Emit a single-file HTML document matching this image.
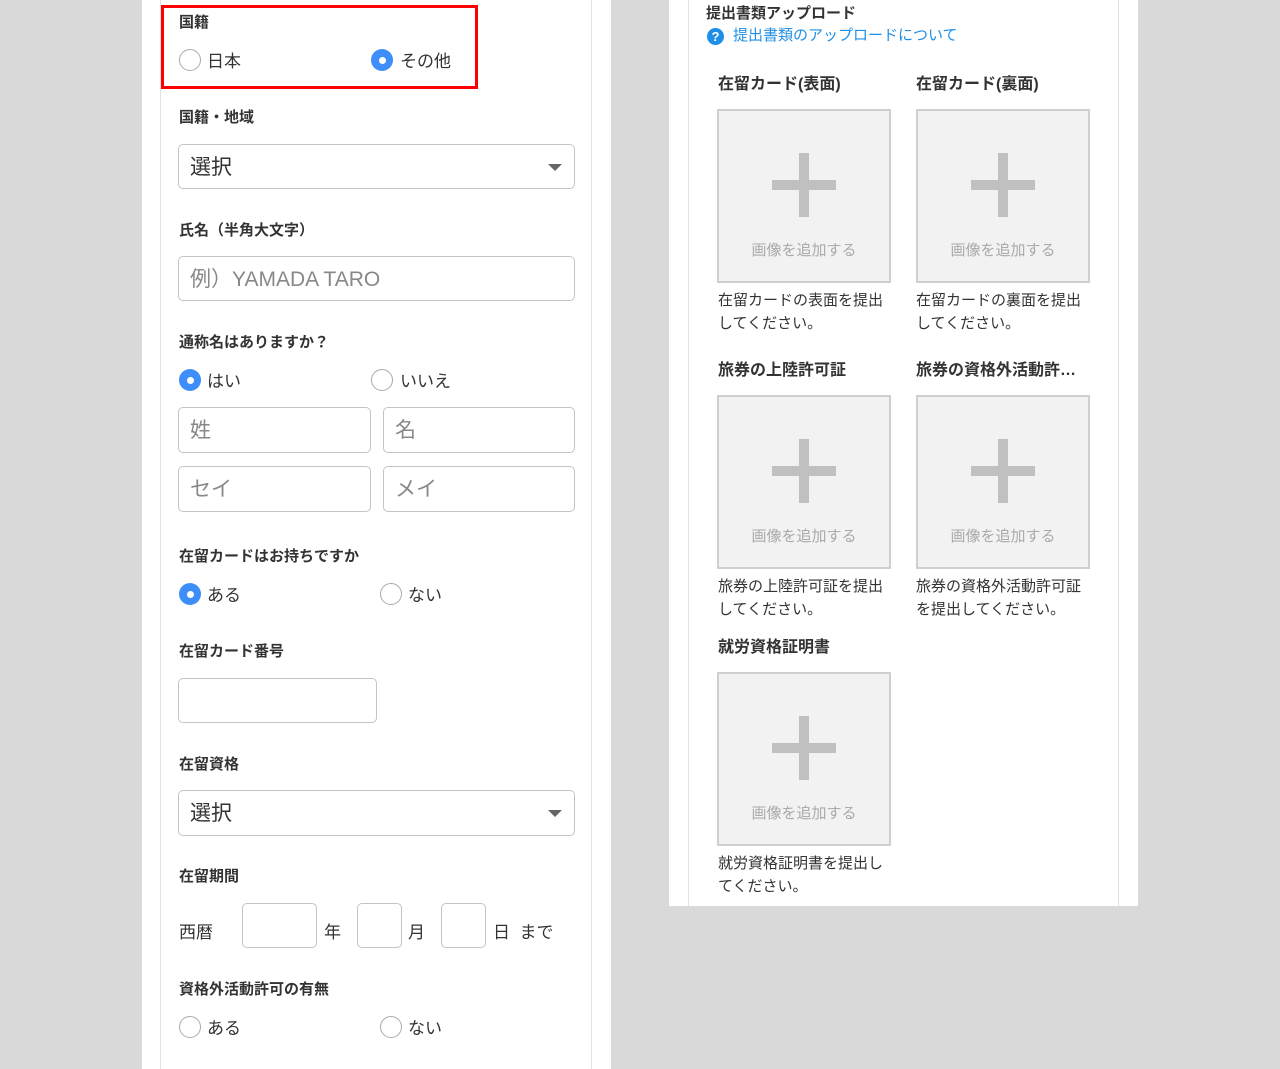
<!DOCTYPE html>
<html><head><meta charset="utf-8"><style>
*{margin:0;padding:0;box-sizing:border-box}
body{width:1280px;height:1069px;background:#d9d9d9;position:relative;overflow:hidden;font-family:"Liberation Sans","Noto Sans CJK JP",sans-serif;color:#333}
.a{position:absolute}
.panel{background:#fff}
.vl{position:absolute;top:0;width:1px;background:#e2e2e2}
.lb{position:absolute;font-size:15px;font-weight:bold;color:#333;line-height:20px;transform:translateY(-10px);white-space:nowrap}
.rd{position:absolute;width:22px;height:22px;border:1.5px solid #aaa;border-radius:50%;background:#fff;transform:translateY(-11px)}
.rd.on{border:none;background:#3d8ef8}
.rd.on::after{content:"";position:absolute;left:7.5px;top:7.5px;width:7px;height:7px;border-radius:50%;background:#fff}
.rt{position:absolute;font-size:17px;line-height:22px;transform:translateY(-9px);color:#333;white-space:nowrap}
.in{position:absolute;border:1.5px solid #c4c4c4;border-radius:5px;background:#fff;font-size:21px;color:#888;padding-left:11px;padding-top:3px;line-height:40px;white-space:nowrap}
.sel{color:#333}
.arr{position:absolute;right:12px;top:19px;width:0;height:0;border-left:7px solid transparent;border-right:7px solid transparent;border-top:7px solid #666}
.tx{position:absolute;font-size:17px;line-height:22px;transform:translateY(-10px);color:#333}
.h{position:absolute;font-size:16px;font-weight:bold;line-height:20px;transform:translateY(-10px);color:#333;white-space:nowrap}
.box{position:absolute;width:174px;height:174px;background:#f2f2f2;border:2px solid #cfcfcf}
.box::before{content:"";position:absolute;left:53px;top:69px;width:64px;height:10px;background:#c0c0c0}
.box::after{content:"";position:absolute;left:80px;top:42px;width:10px;height:64px;background:#c0c0c0}
.box span{position:absolute;left:0;right:0;top:130px;text-align:center;font-size:15px;color:#aaa;line-height:20px;white-space:nowrap}
.d{position:absolute;font-size:15px;line-height:23px;color:#333;width:190px}
</style></head><body>
<div class="a panel" style="left:142px;top:0;width:469px;height:1069px"></div>
<div class="vl" style="left:160px;height:1069px"></div>
<div class="vl" style="left:591px;height:1069px"></div>
<div class="a" style="left:161px;top:5px;width:317px;height:84px;border:3px solid #f00"></div>

<div class="lb" style="left:179px;top:23px">国籍</div>
<div class="rd" style="left:179px;top:60px"></div><div class="rt" style="left:207px;top:60px">日本</div>
<div class="rd on" style="left:371px;top:60px"></div><div class="rt" style="left:400px;top:60px">その他</div>

<div class="lb" style="left:179px;top:118px">国籍・地域</div>
<div class="in sel" style="left:178px;top:144px;width:397px;height:45px">選択<div class="arr"></div></div>

<div class="lb" style="left:179px;top:231px">氏名（半角大文字）</div>
<div class="in" style="left:178px;top:256px;width:397px;height:45px">例）YAMADA TARO</div>

<div class="lb" style="left:179px;top:343px">通称名はありますか？</div>
<div class="rd on" style="left:179px;top:380px"></div><div class="rt" style="left:207px;top:380px">はい</div>
<div class="rd" style="left:371px;top:380px"></div><div class="rt" style="left:400px;top:380px">いいえ</div>
<div class="in" style="left:178px;top:407px;width:193px;height:46px">姓</div>
<div class="in" style="left:383px;top:407px;width:192px;height:46px">名</div>
<div class="in" style="left:178px;top:466px;width:193px;height:46px">セイ</div>
<div class="in" style="left:383px;top:466px;width:192px;height:46px">メイ</div>

<div class="lb" style="left:179px;top:557px">在留カードはお持ちですか</div>
<div class="rd on" style="left:179px;top:594px"></div><div class="rt" style="left:207px;top:594px">ある</div>
<div class="rd" style="left:380px;top:594px"></div><div class="rt" style="left:408px;top:594px">ない</div>

<div class="lb" style="left:179px;top:652px">在留カード番号</div>
<div class="in" style="left:178px;top:678px;width:199px;height:45px"></div>

<div class="lb" style="left:179px;top:765px">在留資格</div>
<div class="in sel" style="left:178px;top:790px;width:397px;height:46px">選択<div class="arr"></div></div>

<div class="lb" style="left:179px;top:877px">在留期間</div>
<div class="tx" style="left:179px;top:932px">西暦</div>
<div class="in" style="left:242px;top:903px;width:75px;height:45px"></div>
<div class="tx" style="left:324px;top:932px">年</div>
<div class="in" style="left:357px;top:903px;width:45px;height:45px"></div>
<div class="tx" style="left:408px;top:932px">月</div>
<div class="in" style="left:441px;top:903px;width:45px;height:45px"></div>
<div class="tx" style="left:493px;top:932px">日&nbsp;&nbsp;まで</div>

<div class="lb" style="left:179px;top:990px">資格外活動許可の有無</div>
<div class="rd" style="left:179px;top:1027px"></div><div class="rt" style="left:207px;top:1027px">ある</div>
<div class="rd" style="left:380px;top:1027px"></div><div class="rt" style="left:408px;top:1027px">ない</div>

<!-- right -->
<div class="a panel" style="left:669px;top:0;width:469px;height:906px"></div>
<div class="vl" style="left:688px;height:906px"></div>
<div class="vl" style="left:1118px;height:906px"></div>
<div class="lb" style="left:706px;top:14px">提出書類アップロード</div>
<div class="a" style="left:707px;top:28px;width:17px;height:17px;border-radius:50%;background:#1e8fe6;color:#fff;font-size:13px;font-weight:bold;text-align:center;line-height:17px">?</div>
<div class="a" style="left:733px;top:26px;font-size:15px;line-height:20px;color:#1e8fe6;white-space:nowrap">提出書類のアップロードについて</div>

<div class="h" style="left:718px;top:85px">在留カード(表面)</div>
<div class="h" style="left:916px;top:85px">在留カード(裏面)</div>
<div class="box" style="left:717px;top:109px"><span>画像を追加する</span></div>
<div class="box" style="left:916px;top:109px"><span>画像を追加する</span></div>
<div class="d" style="left:718px;top:289px">在留カードの表面を提出<br>してください。</div>
<div class="d" style="left:916px;top:289px">在留カードの裏面を提出<br>してください。</div>

<div class="h" style="left:718px;top:371px">旅券の上陸許可証</div>
<div class="h" style="left:916px;top:371px">旅券の資格外活動許…</div>
<div class="box" style="left:717px;top:395px"><span>画像を追加する</span></div>
<div class="box" style="left:916px;top:395px"><span>画像を追加する</span></div>
<div class="d" style="left:718px;top:575px">旅券の上陸許可証を提出<br>してください。</div>
<div class="d" style="left:916px;top:575px">旅券の資格外活動許可証<br>を提出してください。</div>

<div class="h" style="left:718px;top:648px">就労資格証明書</div>
<div class="box" style="left:717px;top:672px"><span>画像を追加する</span></div>
<div class="d" style="left:718px;top:852px">就労資格証明書を提出し<br>てください。</div>
</body></html>
